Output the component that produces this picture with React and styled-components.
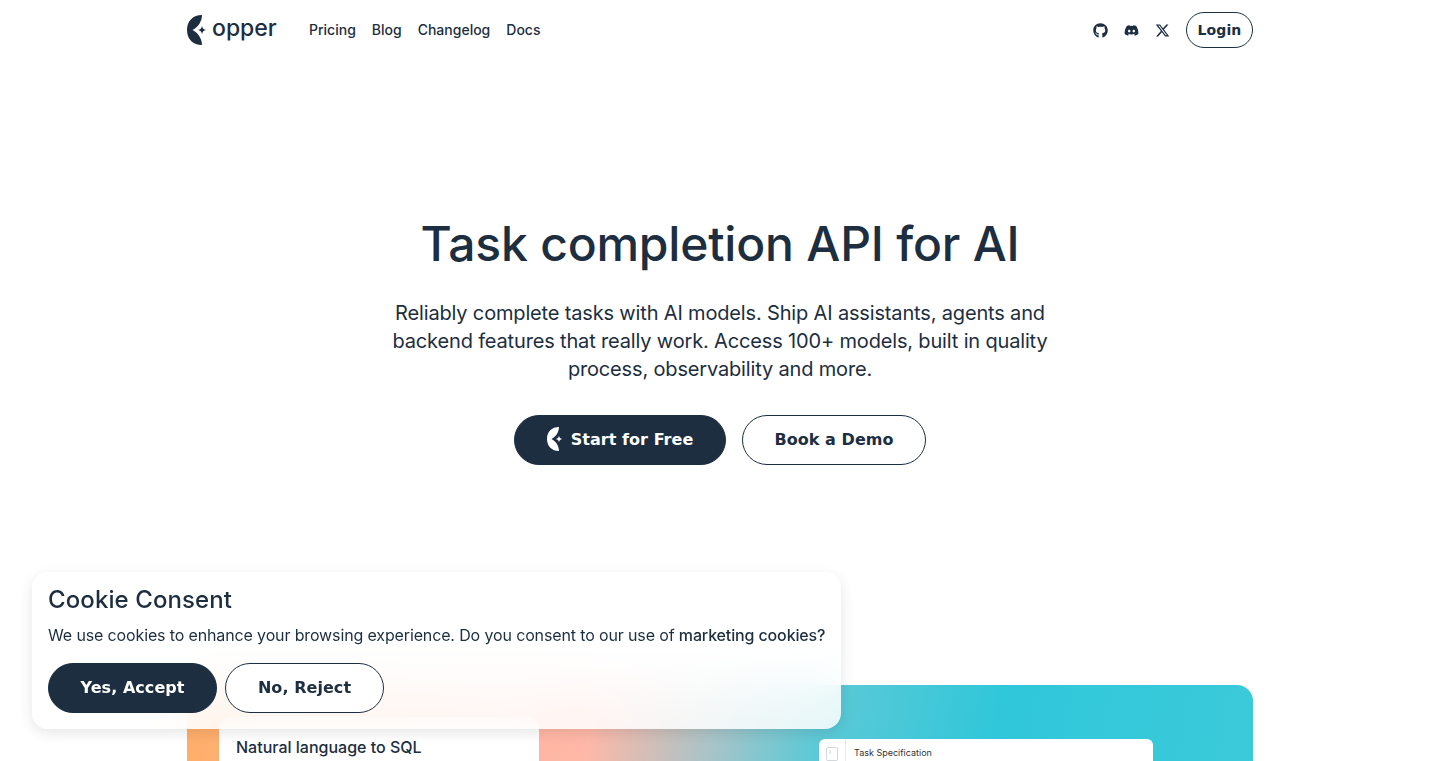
import React from "react";
import styled, { createGlobalStyle } from "styled-components";
import { FaGithub, FaDiscord } from "react-icons/fa";
import { FaXTwitter } from "react-icons/fa6";

const navy = "#1c2e40";
const displayFont = `Inter, "Noto Sans", sans-serif`;
const buttonFont = `"DejaVu Sans", sans-serif`;

const GlobalStyle = createGlobalStyle`
  html, body {
    margin: 0;
    padding: 0;
    background: #fff;
    color: ${navy};
    font-family: ${displayFont};
  }
  * { box-sizing: border-box; }
`;

const Page = styled.div`
  height: 100vh;
  overflow: hidden;
`;

const Container = styled.div`
  width: 1066px;
  margin: 0 auto;
`;

const Header = styled.header`
  height: 60px;
  display: flex;
  align-items: center;
  justify-content: space-between;
`;

const LeftGroup = styled.div`
  display: flex;
  align-items: center;
  gap: 32px;
`;

const Logo = styled.a`
  display: flex;
  align-items: center;
  gap: 5px;
  width: 90px;
`;

const LogoWord = styled.span`
  font-family: Inter, sans-serif;
  font-size: 23px;
  font-weight: 500;
  line-height: 27px;
  height: 30px;
  color: ${navy};
`;

const Nav = styled.nav`
  display: flex;
  align-items: center;
  gap: 16px;
  padding-bottom: 2px;
`;

const NavLink = styled.a`
  font-size: 14px;
  font-weight: 500;
  color: ${navy};
`;

const RightGroup = styled.div`
  display: flex;
  align-items: center;
`;

const Social = styled.a`
  display: flex;
  width: 31px;
  justify-content: center;
  font-size: 15px;
  color: ${navy};
`;

const Socials = styled.div`
  display: flex;
  align-items: center;
  margin-right: 8px;
`;

const Pill = styled.button`
  display: inline-flex;
  align-items: center;
  justify-content: center;
  gap: 8px;
  height: ${(p) => (p.small ? "36px" : "50px")};
  width: ${(p) => p.w};
  border-radius: 25px;
  border: 1px solid ${navy};
  background: ${(p) => (p.dark ? navy : "#fff")};
  color: ${(p) => (p.dark ? "#fff" : navy)};
  font-family: ${buttonFont};
  font-weight: 700;
  font-size: ${(p) => (p.small ? "14px" : "16px")};
  letter-spacing: ${(p) => (p.small ? "0.1px" : "0.05px")};
  padding: ${(p) => (p.small ? "0" : "0 0 2px")};
`;

const Hero = styled.section`
  display: flex;
  flex-direction: column;
  align-items: center;
  padding-top: 154px;
`;

const Title = styled.h1`
  margin: 0;
  font-size: 48px;
  line-height: 60px;
  font-weight: 500;
  letter-spacing: -0.2px;
  color: ${navy};
`;

const Lead = styled.p`
  margin: 25px 0 0;
  width: 680px;
  text-align: center;
  font-size: 20px;
  line-height: 28px;
  font-weight: 400;
  letter-spacing: -0.16px;
  color: ${navy};
`;

const HeroActions = styled.div`
  display: flex;
  gap: 16px;
  margin-top: 32px;
`;

const Showcase = styled.div`
  height: 400px;
  margin-top: 220px;
  border-radius: 16px;
  display: flex;
  background: linear-gradient(
    100deg,
    #ffae68 0%,
    #ffb49c 26%,
    #ffb8a8 36%,
    #a9c4c8 47%,
    #5ec9d6 56%,
    #30c7da 72%,
    #3dcbda 100%
  );
`;

const LeftCard = styled.div`
  width: 320px;
  height: 300px;
  margin: 32px 0 0 32px;
  padding: 20px 17px;
  background: #fff;
  border-radius: 12px;
  font-size: 16px;
  font-weight: 500;
  line-height: 20px;
`;

const RightCard = styled.div`
  width: 334px;
  height: 240px;
  margin: 54px 0 0 280px;
  background: #fff;
  border-radius: 6px;
  display: flex;
`;

const IconRail = styled.div`
  width: 27px;
  border-right: 1px solid #e6e8ea;
  display: flex;
  justify-content: center;
  padding-top: 8px;
`;

const CardTitle = styled.div`
  padding: 8px 8px;
  font-size: 9px;
  line-height: 12px;
  color: #333;
`;

const CookieBanner = styled.aside`
  position: fixed;
  left: 32px;
  bottom: 32px;
  width: 809px;
  height: 157px;
  padding: 12px 16px;
  border-radius: 16px;
  background: rgba(255, 255, 255, 0.85);
  backdrop-filter: blur(24px);
  box-shadow: 0 4px 14px rgba(0, 0, 0, 0.1);
`;

const CookieTitle = styled.h2`
  margin: 0;
  font-size: 24px;
  line-height: 32px;
  font-weight: 500;
  letter-spacing: 0.1px;
`;

const CookieText = styled.p`
  margin: 8px 0 0;
  font-size: 16px;
  line-height: 22px;
  letter-spacing: -0.135px;
  white-space: nowrap;
`;

const Strong = styled.span`
  font-weight: 500;
`;

const CookieActions = styled.div`
  display: flex;
  gap: 8px;
  margin-top: 17px;
`;

const Mark = ({ size, color }) => (
  <svg width={(size * 20) / 30} height={size} viewBox="0 0 20 30" fill={color}>
    <path d="M15 0C6 0 0 6 0 15c0 9 6 15 15 15 0-6-3.500-12-9.500-15C11.500 12 15 6 15 0Z" />
    <path d="M15 11c.5 2.500 1.500 3.500 4 4-2.500.5-3.500 1.500-4 4-.5-2.500-1.500-3.500-4-4 2.500-.5 3.500-1.500 4-4Z" />
  </svg>
);

export default function App() {
  return (
    <Page>
      <GlobalStyle />
      <Container>
        <Header>
          <LeftGroup>
            <Logo>
              <Mark size={30} color={navy} />
              <LogoWord>opper</LogoWord>
            </Logo>
            <Nav>
              <NavLink>Pricing</NavLink>
              <NavLink>Blog</NavLink>
              <NavLink>Changelog</NavLink>
              <NavLink>Docs</NavLink>
            </Nav>
          </LeftGroup>
          <RightGroup>
            <Socials>
              <Social><FaGithub /></Social>
              <Social><FaDiscord /></Social>
              <Social><FaXTwitter /></Social>
            </Socials>
            <Pill small w="67px">Login</Pill>
          </RightGroup>
        </Header>
        <Hero>
          <Title>Task completion API for AI</Title>
          <Lead>
            Reliably complete tasks with AI models. Ship AI assistants, agents and
            <br />
            backend features that really work. Access 100+ models, built in quality
            <br />
            process, observability and more.
          </Lead>
          <HeroActions>
            <Pill dark w="212px">
              <Mark size={24} color="#fff" />
              Start for Free
            </Pill>
            <Pill w="184px">Book a Demo</Pill>
          </HeroActions>
        </Hero>
        <Showcase>
          <LeftCard>Natural language to SQL</LeftCard>
          <RightCard>
            <IconRail>
              <svg width="12" height="14" viewBox="0 0 12 14" fill="none" stroke="#c9cdd1" strokeWidth="0.8">
                <rect x="0.5" y="0.5" width="11" height="13" rx="1" />
                <path d="M3 3l2 2-2 2" />
              </svg>
            </IconRail>
            <CardTitle>Task Specification</CardTitle>
          </RightCard>
        </Showcase>
      </Container>
      <CookieBanner>
        <CookieTitle>Cookie Consent</CookieTitle>
        <CookieText>
          We use cookies to enhance your browsing experience. Do you consent to our use of{" "}
          <Strong>marketing cookies?</Strong>
        </CookieText>
        <CookieActions>
          <Pill dark w="169px">Yes, Accept</Pill>
          <Pill w="159px">No, Reject</Pill>
        </CookieActions>
      </CookieBanner>
    </Page>
  );
}
